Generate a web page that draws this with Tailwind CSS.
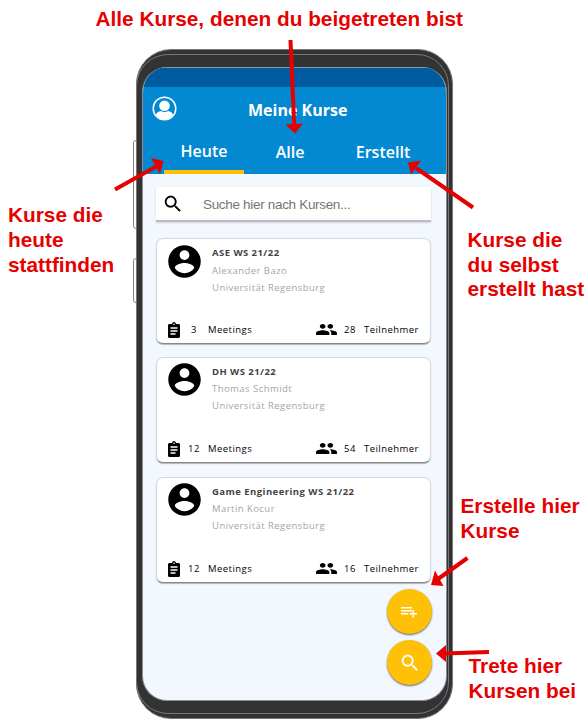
<!DOCTYPE html>
<html lang="de">
<head>
<meta charset="utf-8">
<title>Meine Kurse</title>
<script src="https://cdn.jsdelivr.net/npm/@tailwindcss/browser@4"></script>
</head>
<body class="bg-white">
<svg class="hidden">
  <symbol id="account" viewBox="0 0 24 24"><path d="M12 2C6.48 2 2 6.48 2 12s4.48 10 10 10 10-4.48 10-10S17.52 2 12 2zm0 3c1.66 0 3 1.34 3 3s-1.34 3-3 3-3-1.34-3-3 1.34-3 3-3zm0 14.2c-2.5 0-4.71-1.28-6-3.22.03-1.99 4-3.08 6-3.08 1.99 0 5.97 1.09 6 3.08-1.29 1.94-3.5 3.22-6 3.22z"/></symbol>
  <symbol id="search" viewBox="0 0 24 24"><path d="M15.5 14h-.79l-.28-.27C15.41 12.59 16 11.11 16 9.5 16 5.91 13.09 3 9.5 3S3 5.91 3 9.5 5.91 16 9.5 16c1.61 0 3.09-.59 4.23-1.57l.27.28v.79l5 4.99L20.49 19l-4.99-5zm-6 0C7.01 14 5 11.99 5 9.5S7.01 5 9.5 5 14 7.01 14 9.5 11.99 14 9.5 14z"/></symbol>
  <symbol id="clipboard" viewBox="0 0 12 16"><path fill-rule="evenodd" d="M1.500 2H4C4.300.7 5 0 6 0s1.700.7 2 2h2.500C11.400 2 12 2.600 12 3.500v11c0 .9-.6 1.500-1.500 1.500h-9C.6 16 0 15.400 0 14.500v-11C0 2.600.6 2 1.500 2zM6 1.400a.8.8 0 1 0 0 1.600.8.8 0 0 0 0-1.600zM2.500 5.300v1.400h7V5.300zm0 3v1.400h7V8.300zm0 3v1.400h5v-1.400z"/></symbol>
  <symbol id="people" viewBox="1 5 22 14" preserveAspectRatio="none"><path d="M16 11c1.660 0 2.990-1.340 2.990-3S17.660 5 16 5c-1.660 0-3 1.340-3 3s1.340 3 3 3zm-8 0c1.660 0 2.990-1.340 2.990-3S9.660 5 8 5C6.340 5 5 6.340 5 8s1.340 3 3 3zm0 2c-2.330 0-7 1.170-7 3.500V19h14v-2.500c0-2.330-4.670-3.500-7-3.500zm8 0c-.29 0-.62.02-.97.05 1.160.84 1.970 1.970 1.970 3.450V19h6v-2.500c0-2.330-4.670-3.500-7-3.500z"/></symbol>
</svg>
<div class="relative h-[722px] w-[588px] overflow-hidden">
  <div class="absolute left-[133px] top-[140px] h-[89px] w-[10px] rounded-[3px] border border-[#858585]"></div>
  <div class="absolute left-[133px] top-[258px] h-[45px] w-[10px] rounded-[3px] border border-[#858585]"></div>

  <div class="relative ml-[136px] h-[719px] w-[317px] pt-[49px]">
    <div class="relative h-[670px] rounded-[35px] border border-[#777] bg-[#333] pl-[5px] pr-[5px] pt-[17px]">
      <div class="absolute -left-px right-[3px] top-[4px] bottom-[4px] rounded-[32px] border border-[#777]"></div>
      <main class="relative flex h-[634px] flex-col overflow-hidden rounded-[25px] border-x border-b border-[#8d8d8d] bg-[#f3f8ff] font-['Open_Sans',sans-serif]">
        <div class="h-[20px] shrink-0 border-t border-[#8a9aa8] bg-[#005ca0]"></div>
        <header class="flex h-[87px] shrink-0 flex-col bg-[#0388d2] text-white">
          <div class="flex h-[44px] items-center">
            <svg class="-mt-[2px] ml-[9px] size-[25px]" viewBox="0 0 25 25"><circle cx="12.500" cy="12.500" r="11.300" fill="none" stroke="#fff" stroke-width="1.500"/><circle cx="12.500" cy="9.700" r="5.300" fill="#fff"/><path fill="#fff" d="M3.800 19c.7-2.300 2.600-3.200 5.200-3.900 2 1.500 5 1.500 7 0 2.600.7 4.500 1.600 5.200 3.900-2 3-5 4.600-8.700 4.600S5.800 22 3.800 19z"/></svg>
            <h1 class="ml-[71px] mt-[2px] text-[16px] font-bold leading-[22px]">Meine Kurse</h1>
          </div>
          <nav class="flex h-[43px] text-[16px] font-semibold leading-[41px]">
            <div class="ml-[21px] w-[80px] border-b-4 border-[#ffc107] text-center">Heute</div>
            <div class="ml-[6px] w-[80px] pt-px text-center">Alle</div>
            <div class="ml-[13px] w-[80px] pt-px text-center">Erstellt</div>
          </nav>
        </header>
        <section class="flex flex-col pl-[13px] pr-[15px] pt-[13px]">
          <div class="mb-[16px] flex h-[35px] items-center border-b-2 border-[#b8bbc0] bg-white font-['Liberation_Sans',sans-serif] text-[13.5px] tracking-[-.32px] text-[#757575] shadow-[0_1px_2px_#0002]">
            <svg class="ml-[6px] size-[22px] fill-black"><use href="#search"/></svg>
            <span class="ml-[19px] mt-[3px]">Suche hier nach Kursen...</span>
          </div>
          <article class="mb-[13px] flex h-[106px] flex-col rounded-[7px] border border-[#d5d9df] border-b-[#858789] bg-white shadow-[0_1px_1px_#0004]">
            <div class="flex h-[80px]">
              <svg class="ml-[8px] mt-[3px] size-[39px] fill-black"><use href="#account"/></svg>
              <div class="ml-[8px] pt-[5px] text-[9.5px] leading-[17.500px] tracking-[.45px] text-[#a5a5a5]">
                <h2 class="font-bold text-[#444]">ASE WS 21/22</h2><p>Alexander Bazo</p><p>Universität Regensburg</p>
              </div>
            </div>
            <div class="flex h-[21px] items-center text-[9.5px] tracking-[.45px] text-black">
              <svg class="ml-[11px] h-[16px] w-[12px] fill-black"><use href="#clipboard"/></svg>
              <span class="ml-[3px] w-[22px] pt-px text-center">3</span><span class="ml-[3px] w-[98px] pt-px">Meetings</span>
              <svg class="ml-[10px] h-[11px] w-[21px] fill-black"><use href="#people"/></svg>
              <span class="ml-[7px] w-[20px] pt-px">28</span><span class="pt-px">Teilnehmer</span>
            </div>
          </article>
          <article class="mb-[14px] flex h-[106px] flex-col rounded-[7px] border border-[#d5d9df] border-b-[#858789] bg-white shadow-[0_1px_1px_#0004]">
            <div class="flex h-[80px]">
              <svg class="ml-[8px] mt-[2px] size-[39px] fill-black"><use href="#account"/></svg>
              <div class="ml-[8px] pt-[5px] text-[9.5px] leading-[17px] tracking-[.45px] text-[#a5a5a5]">
                <h2 class="font-bold text-[#444]">DH WS 21/22</h2><p>Thomas Schmidt</p><p>Universität Regensburg</p>
              </div>
            </div>
            <div class="flex h-[21px] items-center text-[9.5px] tracking-[.45px] text-black">
              <svg class="ml-[11px] h-[16px] w-[12px] fill-black"><use href="#clipboard"/></svg>
              <span class="ml-[3px] w-[22px] pt-px text-center">12</span><span class="ml-[3px] w-[98px] pt-px">Meetings</span>
              <svg class="ml-[10px] h-[11px] w-[21px] fill-black"><use href="#people"/></svg>
              <span class="ml-[7px] w-[20px] pt-px">54</span><span class="pt-px">Teilnehmer</span>
            </div>
          </article>
          <article class="flex h-[106px] flex-col rounded-[7px] border border-[#d5d9df] border-b-[#858789] bg-white shadow-[0_1px_1px_#0004]">
            <div class="flex h-[80px]">
              <svg class="ml-[8px] mt-[2px] size-[39px] fill-black"><use href="#account"/></svg>
              <div class="ml-[8px] pt-[5px] text-[9.5px] leading-[17px] tracking-[.45px] text-[#a5a5a5]">
                <h2 class="font-bold text-[#444]">Game Engineering WS 21/22</h2><p>Martin Kocur</p><p>Universität Regensburg</p>
              </div>
            </div>
            <div class="flex h-[21px] items-center text-[9.5px] tracking-[.45px] text-black">
              <svg class="ml-[11px] h-[16px] w-[12px] fill-black"><use href="#clipboard"/></svg>
              <span class="ml-[3px] w-[22px] pt-px text-center">12</span><span class="ml-[3px] w-[98px] pt-px">Meetings</span>
              <svg class="ml-[10px] h-[11px] w-[21px] fill-black"><use href="#people"/></svg>
              <span class="ml-[7px] w-[20px] pt-px">16</span><span class="pt-px">Teilnehmer</span>
            </div>
          </article>
        </section>
        <div class="mr-[14px] mt-[6px] flex flex-col items-end gap-[6px]">
          <div class="flex size-[45px] items-center justify-center rounded-full bg-[#ffc107] shadow-[0_1px_2px_#0009]">
            <svg class="-ml-px size-[18px]" viewBox="0 0 18 18"><path fill="#fff" d="M1 4h11v1.500H1zM1 7h11v1.500H1zM1 10h7v1.500H1zM12.500 7h1.600v3H17v1.500h-2.900v3h-1.600v-3H9.500V10h3z"/></svg>
          </div>
          <div class="flex size-[45px] items-center justify-center rounded-full bg-[#ffc107] shadow-[0_1px_2px_#0009]">
            <svg class="size-[22px] fill-white"><use href="#search"/></svg>
          </div>
        </div>
      </main>
    </div>
  </div>

  <div class="font-['Liberation_Sans',sans-serif] text-[20.8px] font-bold leading-[25px] text-[#e60000]">
    <p class="absolute left-[95.5px] top-[6px] whitespace-nowrap">Alle Kurse, denen du beigetreten bist</p>
    <p class="absolute left-[8px] top-[202px] whitespace-nowrap">Kurse die<br>heute<br>stattfinden</p>
    <p class="absolute left-[467.5px] top-[228px] whitespace-nowrap leading-[24.500px]">Kurse die<br>du selbst<br>erstellt hast</p>
    <p class="absolute left-[460.5px] top-[493px] whitespace-nowrap">Erstelle hier<br>Kurse</p>
    <p class="absolute left-[468.5px] top-[653px] whitespace-nowrap">Trete hier<br>Kursen bei</p>
  </div>
  <svg class="absolute left-0 top-0 h-[722px] w-[588px]" viewBox="0 0 588 722" fill="#e60000" stroke="#e60000" stroke-width="4">
    <path d="M290.500 40L294.200 125M115 189.500L157 166M473 207.500L416 168M467.500 558L438 579M489 652L444 653.500"/>
    <path stroke="none" d="M295 133.500L285.500 124.500 303 123.500zM163.500 161L151 158 160 174zM408 162.500L421 160.500 411 174.500zM431 585L435 570.500 443.500 586zM436 653.500L446 645V662z"/>
  </svg>
</div>
</body>
</html>
